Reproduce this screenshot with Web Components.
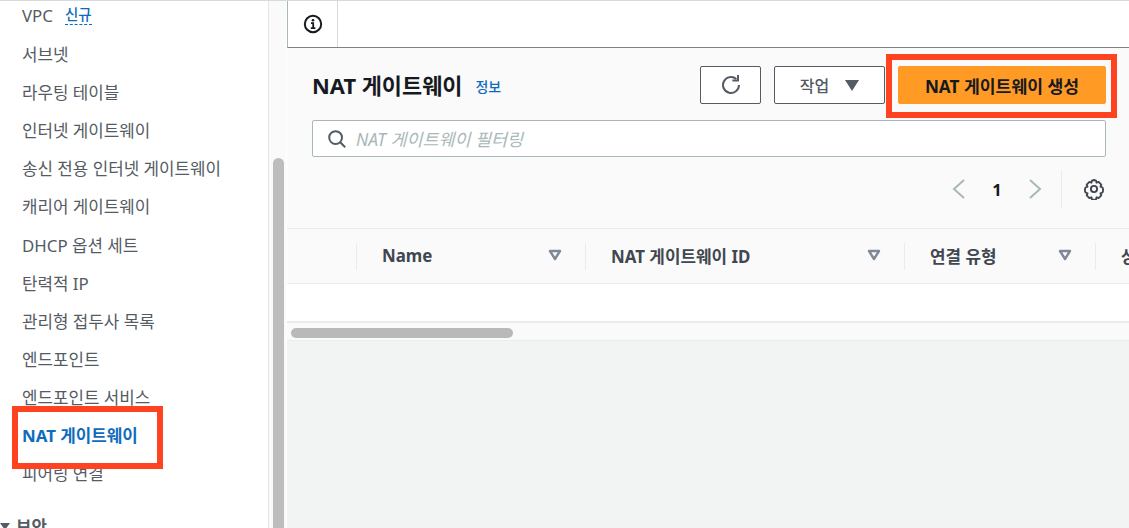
<!DOCTYPE html>
<html lang="ko">
<head>
<meta charset="utf-8">
<title>NAT 게이트웨이</title>
<style>
  html, body { margin: 0; height: 100%; overflow: hidden; background: #fff; }
  body { font-family: "Noto Sans", "Noto Sans CJK KR", sans-serif; color: #16191f; }
</style>
</head>
<body>
<template id="nav-item-tpl">
  <style>
    :host { display: flex; align-items: center; height: 38.17px; padding-left: 22px; font-size: 16.85px; color: #545b64; white-space: nowrap; }
    :host([active]) { color: #0f6cbd; font-weight: 700; }
  </style>
  <slot></slot>
</template>
<template id="side-nav-tpl">
  <style>
    :host { display: flex; width: 287px; height: 100%; flex: none; box-sizing: border-box; overflow: hidden; }
    .list { width: 268px; flex: none; margin-top: -5px; }
    .track { width: 18px; flex: none; border-left: 1px solid #e4e6e6; background: #fafafa; padding-top: 157px; box-sizing: border-box; }
    .thumb { width: 11px; height: 400px; margin-left: 4px; border-radius: 6px 6px 0 0; background: #bdbdbd; }
    .new { color: #0f6cbd; font-size: 14.5px; font-weight: 500; margin-left: 12px; border-bottom: 1px dashed #0f6cbd; line-height: 19px; }
    .section { display: flex; align-items: center; height: 38px; margin-top: 15px; font-weight: 700; font-size: 16.8px; color: #545b64; white-space: nowrap; }
    .section i { width: 0; height: 0; margin-right: 6px; border: 5px solid transparent; border-top: 7px solid #545b64; border-bottom: 0; }
  </style>
  <div class="list">
    <nav-item>VPC<span class="new">신규</span></nav-item>
    <nav-item>서브넷</nav-item>
    <nav-item>라우팅 테이블</nav-item>
    <nav-item>인터넷 게이트웨이</nav-item>
    <nav-item>송신 전용 인터넷 게이트웨이</nav-item>
    <nav-item>캐리어 게이트웨이</nav-item>
    <nav-item>DHCP 옵션 세트</nav-item>
    <nav-item>탄력적 IP</nav-item>
    <nav-item>관리형 접두사 목록</nav-item>
    <nav-item>엔드포인트</nav-item>
    <nav-item>엔드포인트 서비스</nav-item>
    <nav-item active>NAT 게이트웨이</nav-item>
    <nav-item>피어링 연결</nav-item>
    <div class="section"><i></i>보안</div>
  </div>
  <div class="track"><div class="thumb"></div></div>
</template>
<template id="aws-button-tpl">
  <style>
    :host { display: flex; align-items: center; justify-content: center; gap: 16px; height: 38px; box-sizing: border-box; border: 1px solid #545b64; border-radius: 2px; background: #fff; color: #545b64; font-size: 16px; font-weight: 500; white-space: nowrap; }
    :host([primary]) { background: #ff9a25; border-color: #ff9a25; color: #16191f; font-weight: 700; font-size: 17.2px; }
    svg { display: block; }
  </style>
  <slot></slot>
</template>
<template id="col-head-tpl">
  <style>
    :host { display: flex; align-items: center; justify-content: space-between; position: relative; box-sizing: border-box; flex: none; height: 100%; padding: 0 23px 2px 26px; font-size: 16.9px; font-weight: 700; color: #414750; white-space: nowrap; }
    :host::before { content: ""; position: absolute; left: 0; top: 14px; bottom: 13px; width: 1px; background: #e9ebed; }
    svg { flex: none; }
  </style>
  <slot></slot>
  <svg width="14" height="12" viewBox="0 0 14 12"><path d="M2 2h10L7 10z" fill="none" stroke="#7d8998" stroke-width="2.4" stroke-linejoin="round"/></svg>
</template>

<nat-page></nat-page>

<script>
  class NavItem extends HTMLElement {
    constructor() {
      super();
      this.attachShadow({ mode: 'open' });
      this.shadowRoot.appendChild(document.getElementById('nav-item-tpl').content.cloneNode(true));
    }
  }
  class SideNav extends HTMLElement {
    constructor() {
      super();
      this.attachShadow({ mode: 'open' });
      this.shadowRoot.appendChild(document.getElementById('side-nav-tpl').content.cloneNode(true));
    }
  }
  class AwsButton extends HTMLElement {
    constructor() {
      super();
      this.attachShadow({ mode: 'open' });
      this.shadowRoot.appendChild(document.getElementById('aws-button-tpl').content.cloneNode(true));
    }
  }
  class ColHead extends HTMLElement {
    constructor() {
      super();
      this.attachShadow({ mode: 'open' });
      this.shadowRoot.appendChild(document.getElementById('col-head-tpl').content.cloneNode(true));
    }
  }

  class NatTable extends HTMLElement {
    constructor() {
      super();
      this.attachShadow({ mode: 'open' });
      this.shadowRoot.innerHTML = `
        <style>
          :host { display: block; }
          .head { display: flex; height: 54px; border-top: 1px solid #e9ebed; border-bottom: 1px solid #e9ebed; background: #fafafa; overflow: hidden; }
          .select { width: 69px; flex: none; }
          .row { height: 37px; background: #fff; border-bottom: 2px solid #e9ebed; }
          .scroll { height: 18px; background: #fafafa; border-bottom: 1px solid #eaeded; padding: 5px 0 0 4px; box-sizing: border-box; }
          .scroll div { width: 222px; height: 10px; border-radius: 5px; background: #b9b9b9; }
        </style>
        <div class="head">
          <div class="select"></div>
          <col-head style="width:229px">Name</col-head>
          <col-head style="width:319px">NAT 게이트웨이 ID</col-head>
          <col-head style="width:191px">연결 유형</col-head>
          <col-head style="width:120px">상태</col-head>
        </div>
        <div class="row"></div>
        <div class="scroll"><div></div></div>`;
    }
  }

  class NatPanel extends HTMLElement {
    constructor() {
      super();
      this.attachShadow({ mode: 'open' });
      this.shadowRoot.innerHTML = `
        <style>
          :host { display: flex; flex-direction: column; flex: 1; min-width: 0; height: 100%; background: #f2f3f3; }
          .tabs { display: flex; height: 46px; flex: none; background: #fff; border-bottom: 1px solid #7d8487; border-left: 1px solid #aab7b8; box-sizing: content-box; }
          .info { width: 49px; border-right: 1px solid #d5dbdb; display: flex; align-items: center; justify-content: center; }
          .top { background: #fafafa; padding: 18px 23px 0 25px; height: 180px; box-sizing: border-box; }
          .title-row { display: flex; align-items: center; height: 38px; }
          h1 { margin: 2px 0 0; font-size: 21.9px; line-height: 38px; font-weight: 700; color: #16191f; white-space: nowrap; }
          .link { margin: 2px 0 0 13px; color: #0f6cbd; font-size: 14px; font-weight: 500; }
          .actions { display: flex; margin-left: auto; gap: 13px; }
          .filter { display: flex; align-items: center; gap: 9px; height: 37px; margin-top: 16px; padding-left: 14px; box-sizing: border-box; border: 1px solid #aab7b8; border-radius: 2px; background: #fff; color: #aab7b8; font-size: 17.4px; font-style: italic; white-space: nowrap; }
          .pager { display: flex; align-items: center; justify-content: flex-end; height: 38px; margin-top: 13px; }
          .num { width: 62px; text-align: center; font-size: 16.5px; font-weight: 700; color: #16191f; }
          .sep { width: 1px; height: 38px; margin: 0 21px 0 19px; background: #eaeded; }
          .gear { margin-right: 1px; }
          svg { display: block; flex: none; }
        </style>
        <div class="tabs">
          <div class="info">
            <svg width="20" height="20" viewBox="0 0 20 20"><circle cx="10" cy="10" r="8.2" fill="none" stroke="#16191f" stroke-width="2"/><circle cx="10" cy="6.3" r="1.3" fill="#16191f"/><path d="M8 9.2h2.2v5M7.8 14.2h4.6" fill="none" stroke="#16191f" stroke-width="1.8"/></svg>
          </div>
        </div>
        <div class="top">
          <div class="title-row">
            <h1>NAT 게이트웨이</h1><span class="link">정보</span>
            <div class="actions">
              <aws-button style="width:61px">
                <svg width="22" height="22" viewBox="0 0 22 22"><path d="M19 11a8 8 0 1 1-2.7-6" fill="none" stroke="#545b64" stroke-width="2"/><path d="M18 1v5.6h-5.6" fill="none" stroke="#545b64" stroke-width="2"/></svg>
              </aws-button>
              <aws-button style="width:111px">작업 <svg width="14" height="11" viewBox="0 0 14 11"><path d="M0 0h14L7 11z" fill="#545b64"/></svg></aws-button>
              <aws-button primary style="width:208px">NAT 게이트웨이 생성</aws-button>
            </div>
          </div>
          <div class="filter">
            <svg width="20" height="20" viewBox="0 0 20 20"><circle cx="8.6" cy="8.6" r="6.4" fill="none" stroke="#545b64" stroke-width="2"/><path d="M13.2 13.2l5 5" stroke="#545b64" stroke-width="2"/></svg>
            NAT 게이트웨이 필터링
          </div>
          <div class="pager">
            <svg width="14" height="20" viewBox="0 0 14 20"><path d="M12 1L2 10l10 9" fill="none" stroke="#aab7b8" stroke-width="2"/></svg>
            <span class="num">1</span>
            <svg width="14" height="20" viewBox="0 0 14 20"><path d="M2 1l10 9-10 9" fill="none" stroke="#aab7b8" stroke-width="2"/></svg>
            <span class="sep"></span>
            <svg class="gear" width="22" height="22" viewBox="0 0 22 22"><path d="M11 2l2 .6.6 2.1 2-.8 2.7 2.7-.8 2 2 .9.5 1.5v2l-.5 1.5-2 .9.8 2-2.7 2.7-2-.8-.6 2.1-2 .6-2-.6-.6-2.1-2 .8-2.7-2.7.8-2-2-.9-.5-1.5v-2l.5-1.5 2-.9-.8-2 2.7-2.7 2 .8.6-2.1z" fill="none" stroke="#414750" stroke-width="1.9" stroke-linejoin="round"/><circle cx="11" cy="11" r="3.1" fill="none" stroke="#414750" stroke-width="1.9"/></svg>
          </div>
        </div>
        <nat-table></nat-table>`;
    }
  }

  class NatPage extends HTMLElement {
    constructor() {
      super();
      this.attachShadow({ mode: 'open' });
      this.shadowRoot.innerHTML = `
        <style>
          :host { display: flex; position: relative; height: 100vh; overflow: hidden; box-sizing: border-box; border-top: 1px solid #d5dbdb; }
          .mark { position: absolute; box-sizing: border-box; border: 6px solid #ff4320; }
          .mark.nav { left: 12px; top: 405px; width: 151px; height: 63px; }
          .mark.cta { left: 886px; top: 53px; width: 231px; height: 64px; }
        </style>
        <side-nav></side-nav>
        <nat-panel></nat-panel>
        <div class="mark nav"></div>
        <div class="mark cta"></div>`;
    }
  }

  customElements.define('nav-item', NavItem);
  customElements.define('side-nav', SideNav);
  customElements.define('aws-button', AwsButton);
  customElements.define('col-head', ColHead);
  customElements.define('nat-table', NatTable);
  customElements.define('nat-panel', NatPanel);
  customElements.define('nat-page', NatPage);
</script>
</body>
</html>
